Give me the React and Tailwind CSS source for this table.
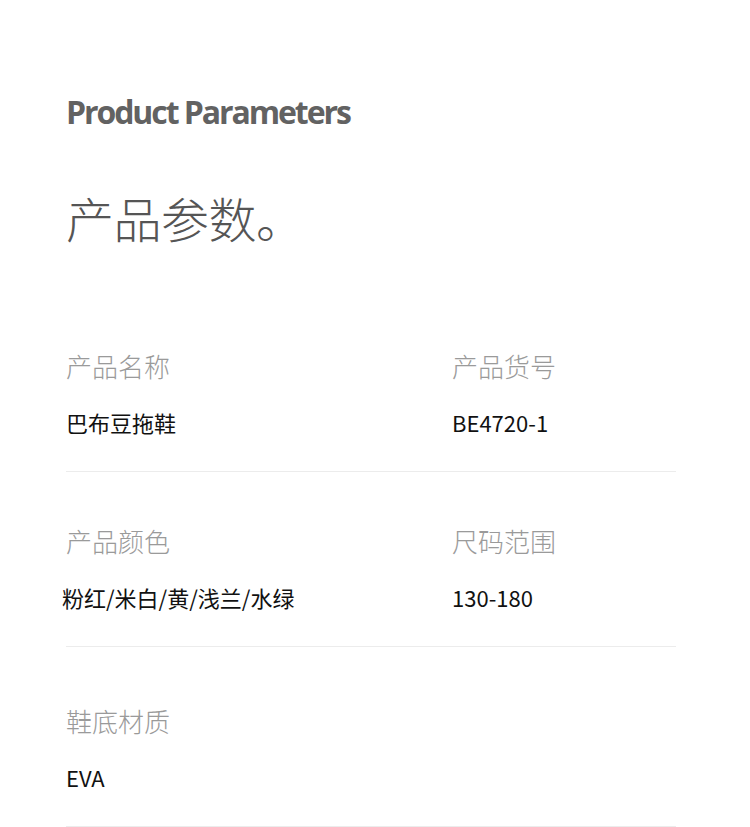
const rows = [
  [
    { label: "产品名称", value: "巴布豆拖鞋" },
    { label: "产品货号", value: "BE4720-1" },
  ],
  [
    { label: "产品颜色", value: "粉红/米白/黄/浅兰/水绿", shift: true },
    { label: "尺码范围", value: "130-180" },
  ],
  [{ label: "鞋底材质", value: "EVA" }],
];

const pads = ["pt-[54px]", "pt-[56px]", "pt-[61px]"];

const cjk = { fontFamily: '"Noto Sans CJK SC", "Noto Sans", sans-serif' };

export default function App() {
  return (
    <div className="w-[750px] h-[827px] bg-white overflow-hidden" style={cjk}>
      <div className="ml-[66px] w-[610px]">
        {/* titulo */}
        <h1
          className="pt-[96px] text-[32px] leading-none font-bold tracking-[-0.065em] text-[#626262]"
          style={{ fontFamily: '"Open Sans", "Liberation Sans", sans-serif' }}
        >
          Product Parameters
        </h1>
        <h2 className="mt-[65px] text-[48px] leading-none font-light text-[#555] tracking-[-0.01em]">
          产品参数。
        </h2>

        <div className="mt-[58px]">
          {rows.map((row, i) => (
            <div
              key={i}
              className={`grid grid-cols-[386px_224px] border-b border-[#ececec] ${pads[i]} pb-[38px]`}
            >
              {row.map((c) => (
                <div key={c.label}>
                  <div className="text-[26px] leading-none font-light text-[#9a9a9a]">
                    {c.label}
                  </div>
                  <div
                    className={`mt-[32px] text-[22px] leading-none text-[#111] ${
                      c.shift ? "-ml-[4px]" : ""
                    }`}
                  >
                    {c.value}
                  </div>
                </div>
              ))}
            </div>
          ))}
        </div>
      </div>
    </div>
  );
}
